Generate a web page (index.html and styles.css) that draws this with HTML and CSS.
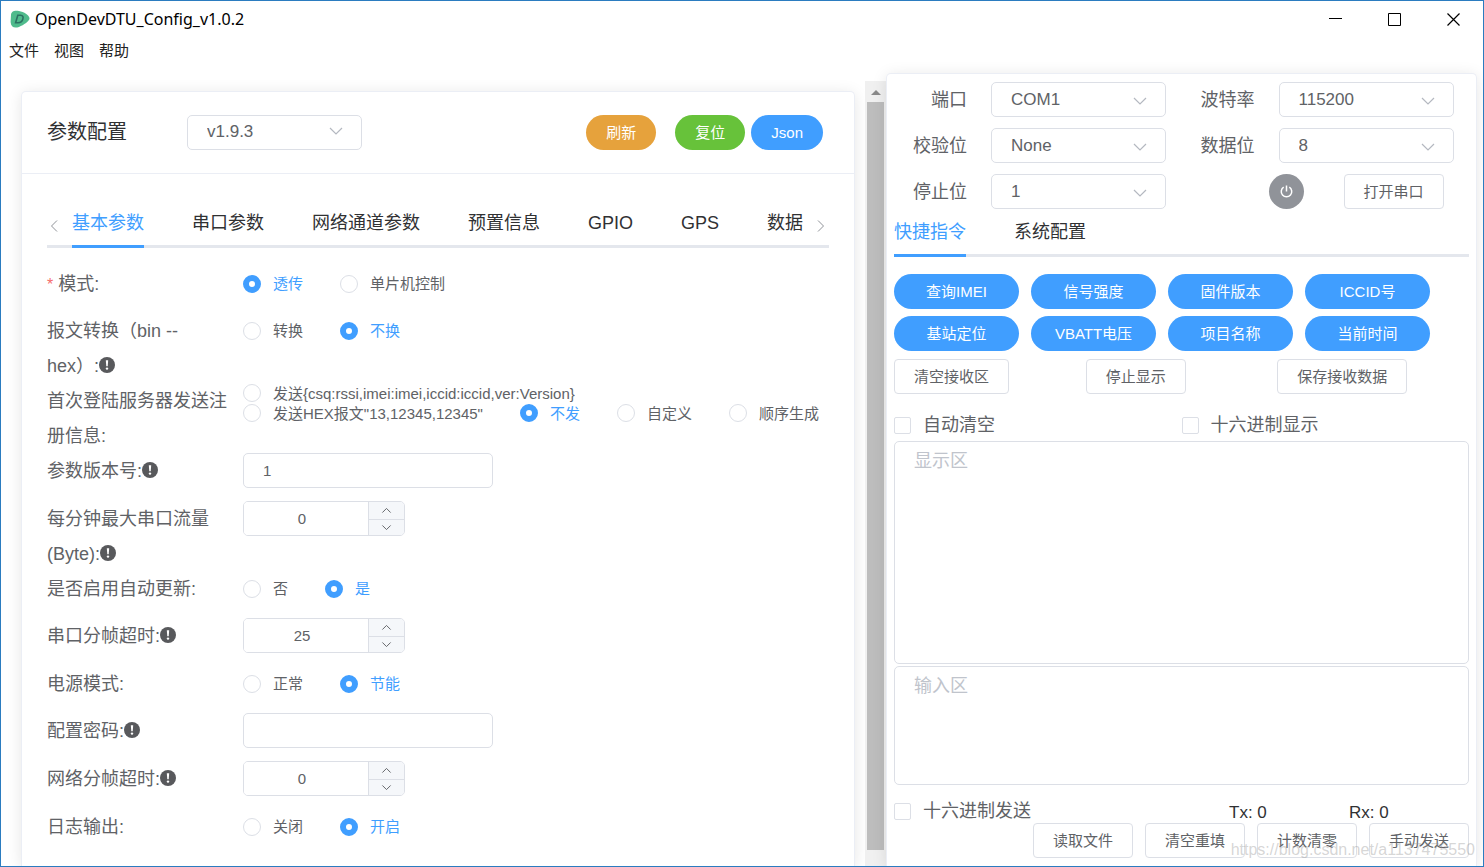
FILE: index.html
```html
<!DOCTYPE html>
<html lang="zh-CN">
<head>
<meta charset="utf-8">
<meta name="viewport" content="width=device-width, initial-scale=1">
<title>OpenDevDTU_Config_v1.0.2</title>
<link rel="stylesheet" href="styles.css">
</head>
<body>
<svg class="sprite" aria-hidden="true">
  <symbol id="chev-down" viewBox="0 0 16 16"><path d="M2 5 L8 11 L14 5" fill="none" stroke="currentColor" stroke-width="1.2"/></symbol>
  <symbol id="chev-up" viewBox="0 0 16 16"><path d="M2 11 L8 5 L14 11" fill="none" stroke="currentColor" stroke-width="1.4"/></symbol>
  <symbol id="chev-dn" viewBox="0 0 16 16"><path d="M2 5 L8 11 L14 5" fill="none" stroke="currentColor" stroke-width="1.4"/></symbol>
  <symbol id="info" viewBox="0 0 16 16"><circle cx="8" cy="8" r="8" fill="#58595c"/><path d="M6.8 3.2h2.4l-.5 6h-1.4z" fill="#fff"/><circle cx="8" cy="11.6" r="1.2" fill="#fff"/></symbol>
</svg>
<div class="window">
  <header class="titlebar">
    <svg class="logo" viewBox="0 0 20 18"><path d="M1 5 C1 1 5 0 9 1 C14 2 19 5 19.500 8 C20 11 14 15 9 17 C4 18.500 1 17 .6 12 Z" fill="#4fbb8c"/><path d="M7.800 5.200 H10.500 Q14 5.500 12.800 9.300 Q11.800 12.800 8 12.800 H5.600 Z" fill="none" stroke="#2c7263" stroke-width="1.600"/></svg>
    <h1 class="title">OpenDevDTU_Config_v1.0.2</h1>
    <div class="winctl">
      <button aria-label="最小化"><svg viewBox="0 0 13 13"><path d="M0 5.500H13" stroke="#000"/></svg></button>
      <button aria-label="最大化"><svg viewBox="0 0 13 13"><path d="M.5 .5H12.500V12.500H.5Z" fill="none" stroke="#000"/></svg></button>
      <button aria-label="关闭"><svg viewBox="0 0 13 13"><path d="M.5 .5L12.500 12.500M12.500 .5L.5 12.500" stroke="#000" stroke-width="1.200"/></svg></button>
    </div>
  </header>
  <nav class="menubar"><button>文件</button><button>视图</button><button>帮助</button></nav>

  <main class="main">
    <div class="left">
      <section class="card config">
        <div class="card-head">
          <h2>参数配置</h2>
          <span class="select"><select aria-label="版本"><option>v1.9.3</option></select><svg><use href="#chev-down"/></svg></span>
          <div class="head-actions">
            <button class="pill orange">刷新</button>
            <button class="pill green">复位</button>
            <button class="pill json">Json</button>
          </div>
        </div>
        <div class="card-body">
          <div class="tabs scroll">
            <button class="arrow prev" aria-label="上一页"><svg viewBox="0 0 8 14"><path d="M7 1.500 L1.500 7 L7 12.500" fill="none" stroke="#909399"/></svg></button>
            <button class="tab active">基本参数</button>
            <button class="tab">串口参数</button>
            <button class="tab">网络通道参数</button>
            <button class="tab">预置信息</button>
            <button class="tab">GPIO</button>
            <button class="tab">GPS</button>
            <button class="tab">数据</button>
            <button class="arrow next" aria-label="下一页"><svg viewBox="0 0 8 14"><path d="M1 1.500 L6.500 7 L1 12.500" fill="none" stroke="#909399"/></svg></button>
          </div>
          <form class="form">
            <div class="row">
              <div class="label"><span class="req">*</span> 模式:</div>
              <div class="field radios">
                <label class="radio"><input type="radio" name="mode" checked><span>透传</span></label>
                <label class="radio"><input type="radio" name="mode"><span>单片机控制</span></label>
              </div>
            </div>
            <div class="row">
              <div class="label">报文转换（bin --<br>hex）:<svg class="info"><use href="#info"/></svg></div>
              <div class="field radios">
                <label class="radio"><input type="radio" name="conv"><span>转换</span></label>
                <label class="radio"><input type="radio" name="conv" checked><span>不换</span></label>
              </div>
            </div>
            <div class="row">
              <div class="label">首次登陆服务器发送注册信息:</div>
              <div class="field radios dense">
                <label class="radio"><input type="radio" name="reg"><span>发送{csq:rssi,imei:imei,iccid:iccid,ver:Version}</span></label>
                <label class="radio"><input type="radio" name="reg"><span>发送HEX报文"13,12345,12345"</span></label>
                <label class="radio"><input type="radio" name="reg" checked><span>不发</span></label>
                <label class="radio"><input type="radio" name="reg"><span>自定义</span></label>
                <label class="radio"><input type="radio" name="reg"><span>顺序生成</span></label>
              </div>
            </div>
            <div class="row control">
              <label class="label" for="ver">参数版本号:<svg class="info"><use href="#info"/></svg></label>
              <div class="field"><input class="text" id="ver" type="text" value="1"></div>
            </div>
            <div class="row control">
              <label class="label" for="flow">每分钟最大串口流量(Byte):<svg class="info"><use href="#info"/></svg></label>
              <div class="field"><div class="number"><input id="flow" type="number" value="0"><div class="steps"><button type="button" aria-label="增加"><svg><use href="#chev-up"/></svg></button><button type="button" aria-label="减少"><svg><use href="#chev-dn"/></svg></button></div></div></div>
            </div>
            <div class="row">
              <div class="label">是否启用自动更新:</div>
              <div class="field radios">
                <label class="radio"><input type="radio" name="upd"><span>否</span></label>
                <label class="radio"><input type="radio" name="upd" checked><span>是</span></label>
              </div>
            </div>
            <div class="row control">
              <label class="label" for="uart">串口分帧超时:<svg class="info"><use href="#info"/></svg></label>
              <div class="field"><div class="number"><input id="uart" type="number" value="25"><div class="steps"><button type="button" aria-label="增加"><svg><use href="#chev-up"/></svg></button><button type="button" aria-label="减少"><svg><use href="#chev-dn"/></svg></button></div></div></div>
            </div>
            <div class="row">
              <div class="label">电源模式:</div>
              <div class="field radios">
                <label class="radio"><input type="radio" name="pow"><span>正常</span></label>
                <label class="radio"><input type="radio" name="pow" checked><span>节能</span></label>
              </div>
            </div>
            <div class="row control">
              <label class="label" for="pwd">配置密码:<svg class="info"><use href="#info"/></svg></label>
              <div class="field"><input class="text" id="pwd" type="text"></div>
            </div>
            <div class="row control">
              <label class="label" for="net">网络分帧超时:<svg class="info"><use href="#info"/></svg></label>
              <div class="field"><div class="number"><input id="net" type="number" value="0"><div class="steps"><button type="button" aria-label="增加"><svg><use href="#chev-up"/></svg></button><button type="button" aria-label="减少"><svg><use href="#chev-dn"/></svg></button></div></div></div>
            </div>
            <div class="row">
              <div class="label">日志输出:</div>
              <div class="field radios">
                <label class="radio"><input type="radio" name="log"><span>关闭</span></label>
                <label class="radio"><input type="radio" name="log" checked><span>开启</span></label>
              </div>
            </div>
          </form>
        </div>
      </section>
      <div class="scrollbar">
        <svg viewBox="0 0 10 5"><path d="M0 5L5 0L10 5Z" fill="#8a8a8a"/></svg>
        <div class="thumb"></div>
      </div>
    </div>

    <section class="card serial">
      <div class="port">
        <div class="pair"><label for="p1">端口</label><span class="select"><select id="p1"><option>COM1</option></select><svg><use href="#chev-down"/></svg></span></div>
        <div class="pair"><label for="p2">波特率</label><span class="select"><select id="p2"><option>115200</option></select><svg><use href="#chev-down"/></svg></span></div>
        <div class="pair"><label for="p3">校验位</label><span class="select"><select id="p3"><option>None</option></select><svg><use href="#chev-down"/></svg></span></div>
        <div class="pair"><label for="p4">数据位</label><span class="select"><select id="p4"><option>8</option></select><svg><use href="#chev-down"/></svg></span></div>
        <div class="pair"><label for="p5">停止位</label><span class="select"><select id="p5"><option>1</option></select><svg><use href="#chev-down"/></svg></span></div>
        <div class="open">
          <button class="power" aria-label="电源"><svg viewBox="0 0 16 16"><path d="M5 3.400 A5.600 5.600 0 1 0 11 3.400 M8 1.500V8" fill="none" stroke="#fff" stroke-width="1.600"/></svg></button>
          <button class="plain">打开串口</button>
        </div>
      </div>
      <div class="tabs">
        <button class="tab active">快捷指令</button>
        <button class="tab">系统配置</button>
      </div>
      <div class="quick">
        <button class="pill">查询IMEI</button><button class="pill">信号强度</button><button class="pill">固件版本</button><button class="pill">ICCID号</button>
        <button class="pill">基站定位</button><button class="pill">VBATT电压</button><button class="pill">项目名称</button><button class="pill">当前时间</button>
      </div>
      <div class="thirds">
        <button class="plain">清空接收区</button><button class="plain">停止显示</button><button class="plain">保存接收数据</button>
      </div>
      <div class="checks">
        <label class="check"><input type="checkbox"><span>自动清空</span></label>
        <label class="check"><input type="checkbox"><span>十六进制显示</span></label>
      </div>
      <textarea class="output" placeholder="显示区" aria-label="显示区"></textarea>
      <textarea class="entry" placeholder="输入区" aria-label="输入区"></textarea>
      <div class="status">
        <label class="check"><input type="checkbox"><span>十六进制发送</span></label>
        <span class="count">Tx: 0</span>
        <span class="count">Rx: 0</span>
      </div>
      <div class="send">
        <button class="plain">读取文件</button><button class="plain">清空重填</button><button class="plain">计数清零</button><button class="plain">手动发送</button>
      </div>
    </section>
  </main>
  <span class="watermark">https://blog.csdn.net/a1137475550</span>
</div>
</body>
</html>
```
FILE: styles.css
```css
* { box-sizing: border-box; }
body {
  margin: 0;
  font-family: "Liberation Sans", "Noto Sans CJK SC", sans-serif;
  font-size: 18px;
  color: #606266;
  background: #fff;
}
button, input, select, textarea { font: inherit; color: inherit; }
button { border: 0; padding: 0; background: none; white-space: nowrap; line-height: 20px; }
.sprite { display: none; }

.window {
  position: relative;
  display: flex;
  flex-direction: column;
  height: 100vh;
  border: 1px solid #2b7cc0;
  overflow: hidden;
}
.titlebar { display: flex; align-items: center; flex: none; height: 36px; padding-left: 9px; }
.logo { width: 20px; height: 18px; }
.title {
  margin: 0 0 0 5px;
  font: 400 16px "Noto Sans", "Noto Sans CJK SC", sans-serif;
  color: #000;
}
.winctl { display: flex; margin-left: auto; }
.winctl button { display: grid; place-items: center; width: 59px; height: 36px; }
.winctl svg { width: 13px; height: 13px; }
.menubar { display: flex; flex: none; gap: 15px; height: 28px; padding-left: 8px; }
.menubar button { font-size: 15px; color: #222; }

.main { flex: 1; min-height: 0; display: grid; grid-template-columns: 885fr 597fr; }
.left { display: flex; min-width: 0; min-height: 0; overflow: hidden; padding-left: 20px; }
.card {
  border: 1px solid #ebeef5;
  border-bottom: 0;
  border-radius: 5px 5px 0 0;
  background: #fff;
  box-shadow: 0 2px 15px rgba(0, 0, 0, .1);
}
.config { flex: 1; min-width: 0; margin: 26px 10px 0 0; }
.card-head {
  display: flex;
  align-items: center;
  padding: 23px 31px 23px 25px;
  border-bottom: 1px solid #ebeef5;
}
.card-head h2 { margin: 0 60px 0 0; font-size: 20px; line-height: 35px; font-weight: 400; color: #303133; }
.head-actions { display: flex; margin-left: auto; }
.head-actions .green { margin: 0 6px 0 19px; }
.card-body { padding: 26px 25px; }

.select { position: relative; display: block; width: 175px; }
.select select {
  appearance: none;
  display: block;
  width: 100%;
  height: 35px;
  padding: 0 38px 2px 19px;
  border: 1px solid #dcdfe6;
  border-radius: 5px;
  background: #fff;
  font-size: 17px;
}
.select svg { position: absolute; right: 18px; top: 8px; width: 16px; height: 16px; color: #b4b8c0; pointer-events: none; }
.port .select svg { top: 11px; }

.pill {
  height: 35px;
  padding: 0 20px;
  border-radius: 18px;
  background: #409eff;
  color: #fff;
  font-size: 15px;
}
.orange { background: #e6a23c; }
.green { background: #67c23a; }
.plain {
  height: 35px;
  padding: 0 19px;
  border: 1px solid #dcdfe6;
  border-radius: 4px;
  background: #fff;
  font-size: 15px;
}

.tabs { display: flex; gap: 48px; border-bottom: 3px solid #e4e7ed; }
.tab { flex: none; height: 48px; margin-bottom: -3px; border-bottom: 3px solid transparent; color: #303133; }
.tab.active { color: #409eff; border-color: #409eff; }
.arrow { flex: none; padding-top: 7px; }
.arrow svg { display: block; width: 8px; height: 14px; }
.prev { width: 25px; margin-right: -48px; padding-left: 3px; }
.next { width: 12px; margin-left: -34px; }

.form { padding-top: 18px; }
.row { display: grid; grid-template-columns: 181px minmax(0, 1fr); column-gap: 15px; line-height: 35px; }
.label { margin: 1px 0 -1px; }
.field { min-height: 47px; }
.control .field { min-height: 48px; }
.req { font-size: 16px; color: #f56c6c; }
.info { width: 16px; height: 16px; vertical-align: -1px; }
.radios { display: flex; flex-wrap: wrap; column-gap: 37px; align-content: flex-start; }
.radio { display: flex; align-items: center; gap: 12px; height: 35px; font-size: 15px; white-space: nowrap; }
.dense .radio { height: 20px; }
.radio input {
  appearance: none;
  width: 18px;
  height: 18px;
  margin: 0;
  border: 1px solid #dcdfe6;
  border-radius: 50%;
  background: #fff;
}
.radio input:checked { border: 6px solid #409eff; }
.radio input:checked + span { color: #409eff; }

.text, .number { height: 35px; border: 1px solid #dcdfe6; border-radius: 5px; font-size: 15px; }
.text { display: block; width: 250px; padding: 0 19px; }
.number { display: flex; width: 162px; overflow: hidden; }
.number input {
  appearance: textfield;
  flex: 1;
  min-width: 0;
  border: 0;
  padding: 0 8px 0 0;
  text-align: center;
}
.number input::-webkit-inner-spin-button { display: none; }
.steps { display: grid; grid-template-rows: 1fr 1fr; width: 36px; background: #f5f7fa; border-left: 1px solid #dcdfe6; }
.steps button { display: grid; place-items: center; }
.steps button + button { border-top: 1px solid #dcdfe6; }
.steps svg { width: 11px; height: 11px; }

.serial {
  display: flex;
  flex-direction: column;
  min-width: 0;
  min-height: 0;
  margin: 8px 6px 0 0;
  padding: 8px 7px;
}
.port { display: grid; grid-template-columns: 1fr 1fr; row-gap: 11px; }
.pair { display: grid; grid-template-columns: 73px 175px; gap: 24px; line-height: 33px; }
.pair label { padding-top: 2px; text-align: right; }
.open { display: flex; gap: 40px; padding-left: 87px; }
.power { display: grid; place-items: center; width: 35px; height: 35px; border-radius: 50%; background: #909399; }
.power svg { width: 15px; height: 15px; }
.quick { display: grid; grid-template-columns: repeat(4, 125px); gap: 7px 12px; margin-top: 17px; }
.thirds { display: grid; grid-template-columns: repeat(3, 1fr); justify-items: start; margin-top: 8px; }
.checks { display: grid; grid-template-columns: 1fr 1fr; margin: 19px 0 4px; }
.check { display: flex; align-items: center; gap: 12px; height: 24px; line-height: 24px; }
.check input {
  appearance: none;
  width: 17px;
  height: 17px;
  margin: 0;
  border: 1px solid #dcdfe6;
  border-radius: 2px;
  background: #fff;
}
textarea {
  display: block;
  min-height: 0;
  padding: 6px 19px;
  border: 1px solid #dcdfe6;
  border-radius: 5px;
  line-height: 26px;
  resize: none;
}
textarea::placeholder { color: #c0c4cc; }
.output { flex: 2 1 0; margin-bottom: 2px; }
.entry { flex: 1 1 0; }
.status { display: flex; align-items: center; margin-top: 14px; }
.status .check { flex: 1; }
.count { width: 120px; padding-top: 4px; font-size: 17px; line-height: 20px; color: #303133; }
.send { display: flex; justify-content: flex-end; gap: 12px; }
.watermark { position: absolute; right: 8px; bottom: 7px; font-size: 16px; color: rgba(150, 150, 150, .4); pointer-events: none; }

.scrollbar {
  display: flex;
  flex-direction: column;
  align-items: center;
  width: 21px;
  margin-top: 16px;
  padding-bottom: 16px;
  background: #f0f0f0;
}
.scrollbar svg { flex: none; width: 10px; height: 5px; margin: 9px 0 7px; }
.thumb { flex: 1; width: 17px; background: #bdbdbd; }
```
